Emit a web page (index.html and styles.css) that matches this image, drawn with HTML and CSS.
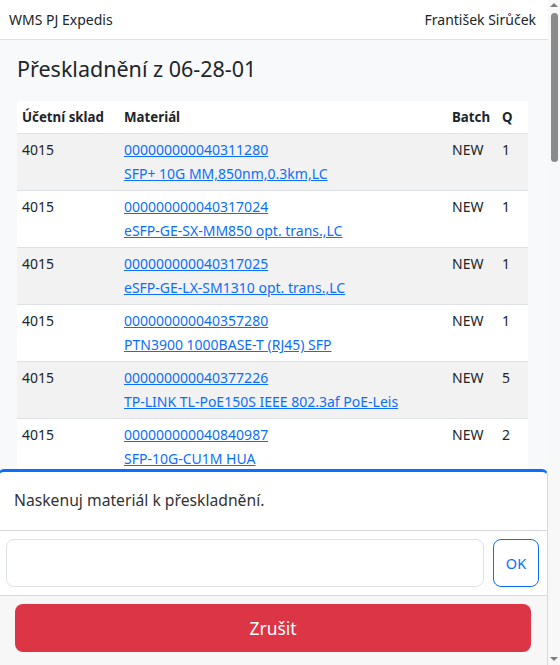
FILE: index.html
```html
<!DOCTYPE html>
<html lang="cs">
<head>
<meta charset="utf-8">
<title>WMS PJ Expedis</title>
<link rel="stylesheet" href="styles.css">
</head>
<body>
<nav class="navbar">
  <span class="brand">WMS PJ Expedis</span>
  <span class="user">František Sirůček</span>
</nav>
<main class="content">
  <h4 class="title">Přeskladnění z 06-28-01</h4>
  <table class="items">
    <colgroup>
      <col class="c-sklad"><col class="c-mat"><col class="c-batch"><col class="c-q">
    </colgroup>
    <thead>
      <tr><th>Účetní sklad</th><th>Materiál</th><th>Batch</th><th>Q</th></tr>
    </thead>
    <tbody>
      <tr><td>4015</td><td><a href="#">000000000040311280</a><br><a href="#">SFP+ 10G MM,850nm,0.3km,LC</a></td><td>NEW</td><td>1</td></tr>
      <tr><td>4015</td><td><a href="#">000000000040317024</a><br><a href="#">eSFP-GE-SX-MM850 opt. trans.,LC</a></td><td>NEW</td><td>1</td></tr>
      <tr><td>4015</td><td><a href="#">000000000040317025</a><br><a href="#">eSFP-GE-LX-SM1310 opt. trans.,LC</a></td><td>NEW</td><td>1</td></tr>
      <tr><td>4015</td><td><a href="#">000000000040357280</a><br><a href="#">PTN3900 1000BASE-T (RJ45) SFP</a></td><td>NEW</td><td>1</td></tr>
      <tr><td>4015</td><td><a href="#">000000000040377226</a><br><a href="#">TP-LINK TL-PoE150S IEEE 802.3af PoE-Leis</a></td><td>NEW</td><td>5</td></tr>
      <tr><td>4015</td><td><a href="#">000000000040840987</a><br><a href="#">SFP-10G-CU1M HUA</a></td><td>NEW</td><td>2</td></tr>
      <tr><td>4015</td><td><a href="#">000000000040841002</a><br><a href="#">SFP-10G-LR 1310nm,10km,LC</a></td><td>NEW</td><td>3</td></tr>
      <tr><td>4015</td><td><a href="#">000000000040841115</a><br><a href="#">QSFP28-100G-SR4 MPO</a></td><td>NEW</td><td>1</td></tr>
      <tr><td>4015</td><td><a href="#">000000000040845310</a><br><a href="#">Patch kabel UTP Cat6 2m šedý</a></td><td>NEW</td><td>10</td></tr>
      <tr><td>4015</td><td><a href="#">000000000040845311</a><br><a href="#">Patch kabel UTP Cat6 5m šedý</a></td><td>NEW</td><td>4</td></tr>
      <tr><td>4015</td><td><a href="#">000000000040851204</a><br><a href="#">Optický patch SM LC-LC 3m duplex</a></td><td>NEW</td><td>6</td></tr>
      <tr><td>4015</td><td><a href="#">000000000040851207</a><br><a href="#">Optický patch MM LC-SC 2m duplex</a></td><td>NEW</td><td>2</td></tr>
      <tr><td>4015</td><td><a href="#">000000000040853390</a><br><a href="#">GPON ONT HG8245H5</a></td><td>NEW</td><td>1</td></tr>
      <tr><td>4015</td><td><a href="#">000000000040855021</a><br><a href="#">eSFP-GE-ZX-SM1550 opt. trans.,LC</a></td><td>NEW</td><td>1</td></tr>
      <tr><td>4015</td><td><a href="#">000000000040856410</a><br><a href="#">Napájecí zdroj 48V DC 150W</a></td><td>NEW</td><td>2</td></tr>
      <tr><td>4015</td><td><a href="#">000000000040857733</a><br><a href="#">SFP-1G-BX10-D 1490/1310nm</a></td><td>NEW</td><td>8</td></tr>
      <tr><td>4015</td><td><a href="#">000000000040857734</a><br><a href="#">SFP-1G-BX10-U 1310/1490nm</a></td><td>NEW</td><td>8</td></tr>
      <tr><td>4015</td><td><a href="#">000000000040860215</a><br><a href="#">Splitter PLC 1:8 SC/APC</a></td><td>NEW</td><td>3</td></tr>
      <tr><td>4015</td><td><a href="#">000000000040860216</a><br><a href="#">Splitter PLC 1:16 SC/APC</a></td><td>NEW</td><td>1</td></tr>
      <tr><td>4015</td><td><a href="#">000000000040862008</a><br><a href="#">Switch TL-SG1008D 8x GbE</a></td><td>NEW</td><td>1</td></tr>
      <tr><td>4015</td><td><a href="#">000000000040863451</a><br><a href="#">Rozvaděč 19" 12U nástěnný</a></td><td>NEW</td><td>1</td></tr>
      <tr><td>4015</td><td><a href="#">000000000040864120</a><br><a href="#">Patch panel 24p Cat6 UTP</a></td><td>NEW</td><td>2</td></tr>
      <tr><td>4015</td><td><a href="#">000000000040865007</a><br><a href="#">XFP-10G-ER 1550nm,40km,LC</a></td><td>NEW</td><td>1</td></tr>
      <tr><td>4015</td><td><a href="#">000000000040866312</a><br><a href="#">Konektor RJ45 Cat6 stíněný</a></td><td>NEW</td><td>50</td></tr>
      <tr><td>4015</td><td><a href="#">000000000040867540</a><br><a href="#">SFP-10G-CU3M HUA</a></td><td>NEW</td><td>2</td></tr>
      <tr><td>4015</td><td><a href="#">000000000040868015</a><br><a href="#">Optická spojka SC/APC simplex</a></td><td>NEW</td><td>20</td></tr>
      <tr><td>4015</td><td><a href="#">000000000040869220</a><br><a href="#">Media konvertor 1G SFP/RJ45</a></td><td>NEW</td><td>2</td></tr>
      <tr><td>4015</td><td><a href="#">000000000040870118</a><br><a href="#">PoE injektor 802.3at 30W</a></td><td>NEW</td><td>3</td></tr>
      <tr><td>4015</td><td><a href="#">000000000040871430</a><br><a href="#">SFP+ 10G SM,1310nm,10km,LC</a></td><td>NEW</td><td>4</td></tr>
      <tr><td>4015</td><td><a href="#">000000000040872006</a><br><a href="#">QSFP+ 40G LR4 1310nm LC</a></td><td>NEW</td><td>1</td></tr>
      <tr><td>4015</td><td><a href="#">000000000040873271</a><br><a href="#">Kabel FTP Cat5e venkovní 305m</a></td><td>NEW</td><td>1</td></tr>
      <tr><td>4015</td><td><a href="#">000000000040874555</a><br><a href="#">Pigtail SM SC/APC 1,5m</a></td><td>NEW</td><td>24</td></tr>
      <tr><td>4015</td><td><a href="#">000000000040875102</a><br><a href="#">Optická kazeta 12 svárů</a></td><td>NEW</td><td>6</td></tr>
      <tr><td>4015</td><td><a href="#">000000000040876340</a><br><a href="#">Router MikroTik hEX RB750Gr3</a></td><td>NEW</td><td>1</td></tr>
      <tr><td>4015</td><td><a href="#">000000000040877811</a><br><a href="#">Access point UniFi U6-Lite</a></td><td>NEW</td><td>2</td></tr>
      <tr><td>4015</td><td><a href="#">000000000040878004</a><br><a href="#">DAC kabel SFP+ 1m pasivní</a></td><td>NEW</td><td>5</td></tr>
      <tr><td>4015</td><td><a href="#">000000000040879126</a><br><a href="#">eSFP-FE-LX-SM1310 opt. trans.,LC</a></td><td>NEW</td><td>2</td></tr>
      <tr><td>4015</td><td><a href="#">000000000040880450</a><br><a href="#">Box optický FTTH 2 porty</a></td><td>NEW</td><td>12</td></tr>
      <tr><td>4015</td><td><a href="#">000000000040881212</a><br><a href="#">Ventilátor rack 2x 120mm</a></td><td>NEW</td><td>1</td></tr>
      <tr><td>4015</td><td><a href="#">000000000040882037</a><br><a href="#">Vyvazovací panel 1U</a></td><td>NEW</td><td>3</td></tr>
      <tr><td>4015</td><td><a href="#">000000000040883319</a><br><a href="#">UPS 1000VA rack 2U</a></td><td>NEW</td><td>1</td></tr>
      <tr><td>4015</td><td><a href="#">000000000040884406</a><br><a href="#">Atenuátor SC/APC 5dB</a></td><td>NEW</td><td>10</td></tr>
      <tr><td>4015</td><td><a href="#">000000000040885590</a><br><a href="#">SFP-GE-T 1000BASE-T RJ45 100m</a></td><td>NEW</td><td>4</td></tr>
      <tr><td>4015</td><td><a href="#">000000000040886701</a><br><a href="#">Napájecí kabel C13-C14 1,8m</a></td><td>NEW</td><td>6</td></tr>
    </tbody>
  </table>
</main>
<section class="scan-card">
  <div class="scan-header">Naskenuj materiál k přeskladnění.</div>
  <div class="scan-body">
    <input class="scan-input" type="text" aria-label="Materiál">
    <button class="btn-ok" type="button">OK</button>
  </div>
  <div class="scan-footer">
    <button class="btn-cancel" type="button">Zrušit</button>
  </div>
</section>
<div class="scrollbar" aria-hidden="true">
  <span class="sb-up"></span>
  <span class="sb-thumb"></span>
  <span class="sb-down"></span>
</div>
</body>
</html>
```
FILE: styles.css
```css
* {
  box-sizing: border-box;
}

body {
  margin: 0 12px 0 0;
  background: #f8f9fa;
  font-family: "Noto Sans", "Open Sans", sans-serif;
  font-size: 14px;
  line-height: 24px;
  color: #212529;
}

.navbar {
  height: 40px;
  background: #fff;
  border-bottom: 1px solid #dee2e6;
  display: flex;
  align-items: center;
  justify-content: space-between;
  padding: 0 12px 0 9px;
}

.content {
  padding: 16px 20px 216px 17px;
}

.title {
  margin: 0 0 20px;
  font-size: 21.5px;
  font-weight: 400;
  line-height: 25px;
}

.items {
  width: 100%;
  table-layout: fixed;
  border-collapse: collapse;
  background: #fff;
}

.c-sklad { width: 102px; }
.c-batch { width: 50px; }
.c-q { width: 31px; }

.items th,
.items td {
  padding: 4px 5px;
  text-align: left;
  vertical-align: top;
  border-bottom: 1px solid #dee2e6;
  white-space: nowrap;
}

.items th {
  font-weight: 700;
  font-size: 13.3px;
}

.items tbody tr:nth-child(odd) td {
  background: #f2f2f2;
}

.items a {
  color: #0d6efd;
  text-decoration: underline;
}

.scan-card {
  position: fixed;
  left: -2px;
  right: 12px;
  bottom: 0;
  background: #fff;
  border: 1px solid #d6d8db;
  border-top: 3px solid #0d6efd;
  border-bottom: 0;
  border-radius: 6px 6px 0 0;
}

.scan-header {
  padding: 15px 15px 16px;
  font-size: 15.7px;
  line-height: 27px;
  color: #333;
  border-bottom: 1px solid #d6d8db;
}

.scan-body {
  display: flex;
  gap: 9px;
  padding: 8px 8px 8px 7px;
  border-bottom: 1px solid #d6d8db;
}

.scan-input {
  flex: 1;
  min-width: 0;
  height: 48px;
  border: 1px solid #dee2e6;
  border-radius: 8px;
  background: #fff;
  font: inherit;
}

.btn-ok {
  width: 46px;
  height: 48px;
  border: 1px solid #0d6efd;
  border-radius: 8px;
  background: #fff;
  color: #0d6efd;
  font-family: inherit;
  font-size: 14.5px;
}

.scan-footer {
  background: #f7f7f7;
  padding: 8px 16px 13px 16px;
}

.btn-cancel {
  display: block;
  width: 100%;
  height: 48px;
  border: 0;
  border-radius: 8px;
  background: #dc3545;
  color: #fff;
  font-family: inherit;
  font-size: 17.4px;
}

/* browser scrollbar (drawn, since the capture hides native ones) */
.scrollbar {
  position: fixed;
  top: 0;
  right: 0;
  bottom: 0;
  width: 12px;
  background: #f8f8f8;
  display: flex;
  flex-direction: column;
  align-items: center;
}

.scrollbar span {
  display: block;
  flex-shrink: 0;
}

.sb-up {
  margin-top: 3px;
  width: 0;
  height: 0;
  border-left: 4px solid transparent;
  border-right: 4px solid transparent;
  border-bottom: 4px solid #7f7f7f;
}

.sb-thumb {
  margin-top: 6px;
  width: 7px;
  height: 149px;
  border-radius: 4px;
  background: #8a8a8a;
}

.sb-down {
  margin-top: auto;
  margin-bottom: 4px;
  width: 0;
  height: 0;
  border-left: 4px solid transparent;
  border-right: 4px solid transparent;
  border-top: 4px solid #7f7f7f;
}
```
